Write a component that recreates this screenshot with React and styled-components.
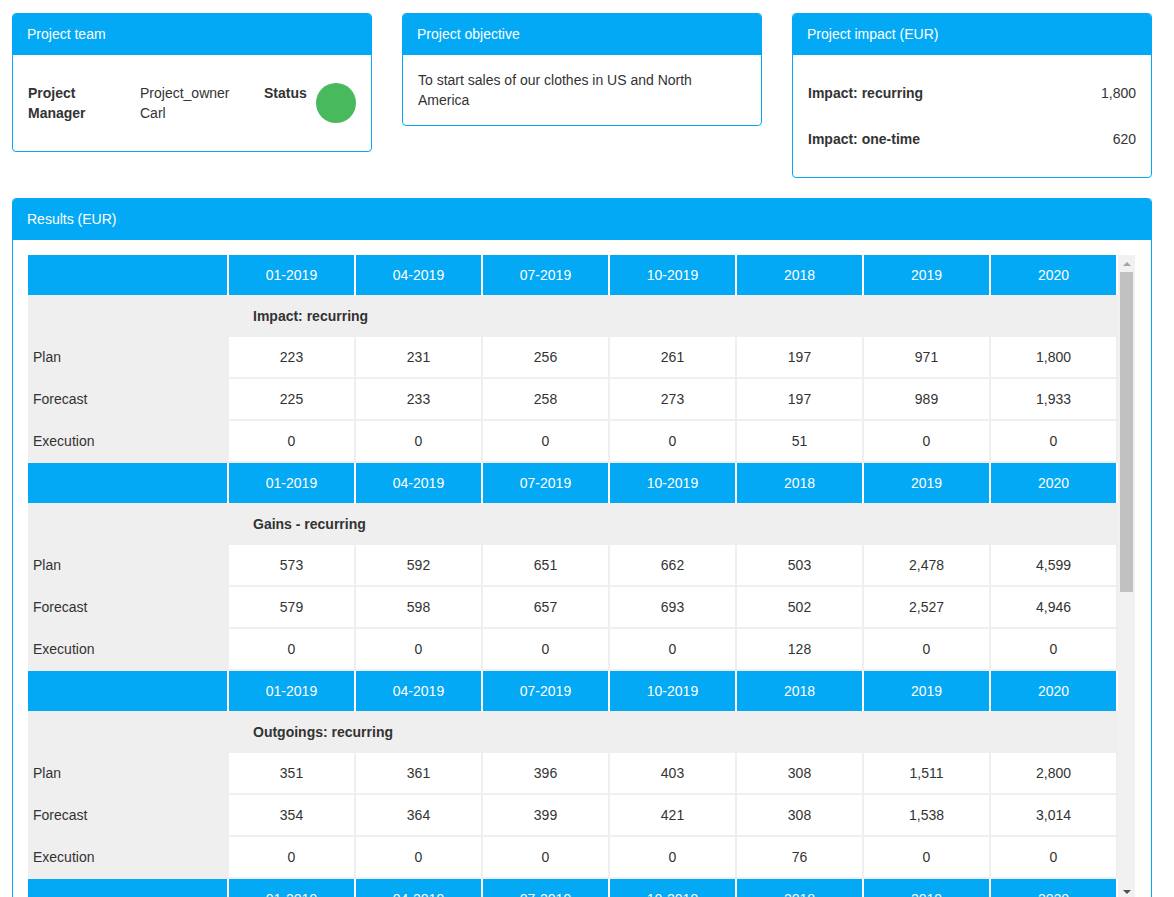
import React from "react";
import styled, { createGlobalStyle } from "styled-components";

const BLUE = "#03a9f4";
const GREY = "#efefef";
const TEXT = "#333333";

const GlobalStyle = createGlobalStyle`
  html, body {
    margin: 0;
    padding: 0;
    height: 100%;
    overflow: hidden;
    background: #ffffff;
  }
  body {
    font-family: "Liberation Sans", Arial, Helvetica, sans-serif;
    font-size: 14px;
    color: ${TEXT};
  }
  * { box-sizing: border-box; }
`;

const Page = styled.div`
  width: 1152px;
  padding: 13px 0 0 12px;
  display: flex;
  flex-direction: column;
  gap: 20px;
`;

const TopRow = styled.div`
  display: grid;
  grid-template-columns: repeat(3, 360px);
  column-gap: 30px;
  align-items: start;
`;

const Card = styled.section`
  border: 1px solid ${BLUE};
  border-radius: 4px;
  background: #fff;
  overflow: hidden;
`;

const CardHeader = styled.header`
  background: ${BLUE};
  color: #fff;
  font-size: 14px;
  margin: -1px -1px 0;
  padding: 1px 15px 0;
  height: 42px;
  line-height: 40px;
`;

const CardBody = styled.div`
  padding: ${(p) => p.$pad || "15px"};
  line-height: 20px;
`;

const TeamGrid = styled.div`
  display: grid;
  grid-template-columns: 112px 124px 52px 40px;
  align-items: start;
`;

const Strong = styled.div`
  font-weight: bold;
  line-height: 20px;
`;

const Value = styled.div`
  line-height: 20px;
`;

const StatusDot = styled.div`
  width: 40px;
  height: 40px;
  border-radius: 50%;
  background: ${(p) => p.$color};
`;

const ImpactRow = styled.div`
  display: flex;
  justify-content: space-between;
  align-items: center;
  height: 46px;
`;

const ImpactLabel = styled.span`
  font-weight: bold;
`;

const ResultsBody = styled.div`
  padding: 15px 16px 0 15px;
`;

const ScrollArea = styled.div`
  display: flex;
  height: 645px;
  background: ${GREY};
`;

const Viewport = styled.div`
  width: 1090px;
  height: 100%;
  overflow: hidden;
`;

const ScrollTrack = styled.div`
  width: 17px;
  height: 100%;
  display: flex;
  flex-direction: column;
  background: #f1f1f1;
`;

const ScrollButton = styled.div`
  height: 17px;
  flex: none;
  display: flex;
  align-items: center;
  justify-content: center;

  &::before {
    content: "";
    width: 0;
    height: 0;
    border-left: 4px solid transparent;
    border-right: 4px solid transparent;
    ${(p) =>
      p.$dir === "up"
        ? `border-bottom: 4px solid #a3a3a3;`
        : `border-top: 4px solid #505050;`}
  }
`;

const ScrollThumb = styled.div`
  height: 320px;
  margin: 0 2px;
  background: #c1c1c1;
  flex: none;
`;

const ScrollRest = styled.div`
  flex: 1;
`;

const Table = styled.table`
  width: 1090px;
  table-layout: fixed;
  border-collapse: separate;
  border-spacing: 0;
  background: ${GREY};
  font-size: 14px;
  color: ${TEXT};
`;

const HeadCell = styled.th`
  height: 40px;
  padding: 0;
  background: ${BLUE};
  color: #fff;
  font-weight: normal;
  text-align: center;
  border-right: 2px solid #fff;
`;

const SectionCell = styled.td`
  height: 42px;
  padding: 0 0 0 24px;
  font-weight: bold;
  text-align: left;
  background: ${GREY};
`;

const LabelCell = styled.td`
  height: 42px;
  padding: 0 0 0 5px;
  background: ${GREY};
  border-bottom: 2px solid ${GREY};
  border-right: 2px solid ${GREY};
  text-align: left;
`;

const DataCell = styled.td`
  height: 42px;
  padding: 0;
  background: #fff;
  text-align: center;
  border-bottom: 2px solid ${GREY};
  border-right: 2px solid ${GREY};
`;

const periods = ["01-2019", "04-2019", "07-2019", "10-2019", "2018", "2019", "2020"];

const sections = [
  {
    title: "Impact: recurring",
    rows: [
      ["Plan", ["223", "231", "256", "261", "197", "971", "1,800"]],
      ["Forecast", ["225", "233", "258", "273", "197", "989", "1,933"]],
      ["Execution", ["0", "0", "0", "0", "51", "0", "0"]],
    ],
  },
  {
    title: "Gains - recurring",
    rows: [
      ["Plan", ["573", "592", "651", "662", "503", "2,478", "4,599"]],
      ["Forecast", ["579", "598", "657", "693", "502", "2,527", "4,946"]],
      ["Execution", ["0", "0", "0", "0", "128", "0", "0"]],
    ],
  },
  {
    title: "Outgoings: recurring",
    rows: [
      ["Plan", ["351", "361", "396", "403", "308", "1,511", "2,800"]],
      ["Forecast", ["354", "364", "399", "421", "308", "1,538", "3,014"]],
      ["Execution", ["0", "0", "0", "0", "76", "0", "0"]],
    ],
  },
  {
    title: "Impact: one-time",
    rows: [
      ["Plan", ["77", "80", "89", "91", "68", "337", "620"]],
      ["Forecast", ["78", "81", "90", "95", "68", "344", "666"]],
      ["Execution", ["0", "0", "0", "0", "18", "0", "0"]],
    ],
  },
];

export default function App() {
  return (
    <>
      <GlobalStyle />
      <Page>
        <TopRow>
          <Card>
            <CardHeader>Project team</CardHeader>
            <CardBody $pad="28px 15px 28px">
              <TeamGrid>
                <Strong>Project<br />Manager</Strong>
                <Value>Project_owner<br />Carl</Value>
                <Strong>Status</Strong>
                <StatusDot $color="#49b95d" />
              </TeamGrid>
            </CardBody>
          </Card>
          <Card>
            <CardHeader>Project objective</CardHeader>
            <CardBody $pad="15px 15px 15px">
              To start sales of our clothes in US and North America
            </CardBody>
          </Card>
          <Card>
            <CardHeader>Project impact (EUR)</CardHeader>
            <CardBody $pad="15px 15px 15px">
              <ImpactRow>
                <ImpactLabel>Impact: recurring</ImpactLabel>
                <span>1,800</span>
              </ImpactRow>
              <ImpactRow>
                <ImpactLabel>Impact: one-time</ImpactLabel>
                <span>620</span>
              </ImpactRow>
            </CardBody>
          </Card>
        </TopRow>
        <Card>
          <CardHeader>Results (EUR)</CardHeader>
          <ResultsBody>
            <ScrollArea>
              <Viewport>
                <Table>
                  <colgroup>
                    <col style={{ width: 201 }} />
                    {periods.map((p) => (
                      <col key={p} style={{ width: 127 }} />
                    ))}
                  </colgroup>
                  <tbody>
                    {sections.map((s) => (
                      <React.Fragment key={s.title}>
                        <tr>
                          <HeadCell />
                          {periods.map((p) => (
                            <HeadCell key={p}>{p}</HeadCell>
                          ))}
                        </tr>
                        <tr>
                          <SectionCell />
                          <SectionCell colSpan={7}>{s.title}</SectionCell>
                        </tr>
                        {s.rows.map(([label, vals]) => (
                          <tr key={label}>
                            <LabelCell>{label}</LabelCell>
                            {vals.map((v, i) => (
                              <DataCell key={i}>{v}</DataCell>
                            ))}
                          </tr>
                        ))}
                      </React.Fragment>
                    ))}
                  </tbody>
                </Table>
              </Viewport>
              <ScrollTrack>
                <ScrollButton $dir="up" />
                <ScrollThumb />
                <ScrollRest />
                <ScrollButton $dir="down" />
              </ScrollTrack>
            </ScrollArea>
          </ResultsBody>
        </Card>
      </Page>
    </>
  );
}
